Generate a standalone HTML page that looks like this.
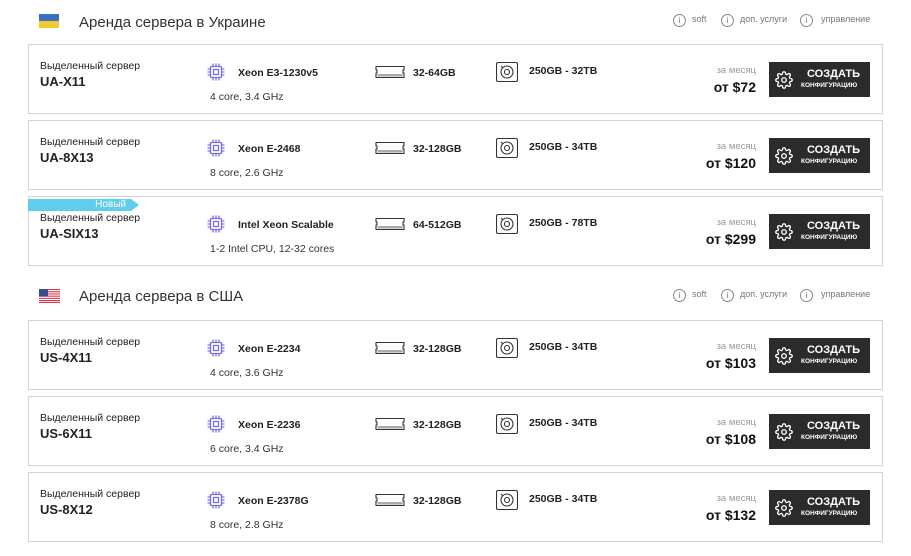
<!DOCTYPE html>
<html><head><meta charset="utf-8"><style>
*{margin:0;padding:0;box-sizing:border-box}
body{width:911px;height:556px;background:#fff;font-family:"Liberation Sans","DejaVu Sans",sans-serif;color:#222;position:relative;overflow:hidden}
.a{position:absolute;white-space:nowrap}
.card{position:absolute;left:28px;width:855px;height:70px;border:1px solid #d4d4d4;background:#fff}
.lbl{font-size:10.5px;color:#222}
.nm{font-size:13px;font-weight:bold;color:#222}
.sp{font-size:10.5px;font-weight:bold;color:#222}
.sub{font-size:10.5px;color:#333}
.zm{font-size:9.5px;color:#999;text-align:right}
.pr{font-size:14px;font-weight:bold;color:#111;text-align:right}
.btn{position:absolute;width:101px;height:35px;background:#2b2b2b;color:#fff}
.h{font-size:15px;color:#333}
.inf{font-size:9px;color:#777}
.ic{position:absolute;width:13px;height:13px;border:1px solid #888;border-radius:50%;font-size:8px;color:#777;text-align:center;line-height:11px}
</style></head><body>

<div class="a" style="left:39px;top:14px;width:20px;height:7px;background:#3a6fc4"></div>
<div class="a" style="left:39px;top:21px;width:20px;height:7px;background:#f0cc2c"></div>
<div class="a h" style="left:79px;top:14px">Аренда сервера в Украине</div>
<div class="ic" style="left:673px;top:14px">i</div><div class="a inf" style="left:692px;top:14px">soft</div>
<div class="ic" style="left:721px;top:14px">i</div><div class="a inf" style="left:740px;top:14px">доп. услуги</div>
<div class="ic" style="left:800px;top:14px">i</div><div class="a inf" style="left:821px;top:14px">управление</div>

<svg class="a" style="left:39px;top:289px" width="21" height="14" viewBox="0 0 21 14">
<rect width="21" height="14" fill="#fff"/>
<g fill="#d33a4a"><rect y="0" width="21" height="1.1"/><rect y="2.2" width="21" height="1.1"/><rect y="4.4" width="21" height="1.1"/><rect y="6.6" width="21" height="1.1"/><rect y="8.8" width="21" height="1.1"/><rect y="11" width="21" height="1.1"/><rect y="12.9" width="21" height="1.1"/></g>
<rect width="9" height="7.5" fill="#3c4a8c"/></svg>
<div class="a h" style="left:79px;top:288px">Аренда сервера в США</div>
<div class="ic" style="left:673px;top:289px">i</div><div class="a inf" style="left:692px;top:289px">soft</div>
<div class="ic" style="left:721px;top:289px">i</div><div class="a inf" style="left:740px;top:289px">доп. услуги</div>
<div class="ic" style="left:800px;top:289px">i</div><div class="a inf" style="left:821px;top:289px">управление</div>

<div id="cards"></div>
<script>
var d=[[44,"UA-X11","Xeon E3-1230v5","4 core, 3.4 GHz","32-64GB","250GB - 32TB","от $72"],
[120,"UA-8X13","Xeon E-2468","8 core, 2.6 GHz","32-128GB","250GB - 34TB","от $120"],
[196,"UA-SIX13","Intel Xeon Scalable","1-2 Intel CPU, 12-32 cores","64-512GB","250GB - 78TB","от $299"],
[320,"US-4X11","Xeon E-2234","4 core, 3.6 GHz","32-128GB","250GB - 34TB","от $103"],
[396,"US-6X11","Xeon E-2236","6 core, 3.4 GHz","32-128GB","250GB - 34TB","от $108"],
[472,"US-8X12","Xeon E-2378G","8 core, 2.8 GHz","32-128GB","250GB - 34TB","от $132"]];
var cpu='<svg width="18" height="18" viewBox="0 0 18 18" fill="none" stroke="#7b6ee0" stroke-width="1.3"><rect x="3.5" y="3.5" width="11" height="11" rx="1"/><rect x="6.5" y="6.5" width="5" height="5"/><path d="M6 0.5v3M9 0.5v3M12 0.5v3M6 14.5v3M9 14.5v3M12 14.5v3M0.5 6h3M0.5 9h3M0.5 12h3M14.5 6h3M14.5 9h3M14.5 12h3"/></svg>';
var ram='<svg width="30" height="14" viewBox="0 0 30 14" fill="none" stroke="#333" stroke-width="1.1"><path d="M1 1.5h28v3.5h-1v3h1v4.5H1V8h1V5H1z"/><rect x="2.5" y="9" width="25" height="2.5" fill="#aaa" stroke="none"/></svg>';
var hdd='<svg width="22" height="20" viewBox="0 0 22 20" fill="none" stroke="#333" stroke-width="1.1"><rect x="0.5" y="0.5" width="21" height="19" rx="1.5"/><circle cx="11" cy="10" r="6"/><circle cx="11" cy="10" r="2.5"/><path d="M5 4l2 2"/></svg>';
var gear='<svg width="18" height="18" viewBox="0 0 24 24" fill="none" stroke="#fff" stroke-width="1.8"><circle cx="12" cy="12" r="3"/><path d="M19.4 15a1.7 1.7 0 0 0 .3 1.8l.1.1a2 2 0 1 1-2.8 2.8l-.1-.1a1.7 1.7 0 0 0-1.8-.3 1.7 1.7 0 0 0-1 1.5V21a2 2 0 1 1-4 0v-.1a1.7 1.7 0 0 0-1.1-1.5 1.7 1.7 0 0 0-1.8.3l-.1.1a2 2 0 1 1-2.8-2.8l.1-.1a1.7 1.7 0 0 0 .3-1.8 1.7 1.7 0 0 0-1.5-1H3a2 2 0 1 1 0-4h.1a1.7 1.7 0 0 0 1.5-1.1 1.7 1.7 0 0 0-.3-1.8l-.1-.1a2 2 0 1 1 2.8-2.8l.1.1a1.7 1.7 0 0 0 1.8.3H9a1.7 1.7 0 0 0 1-1.5V3a2 2 0 1 1 4 0v.1a1.7 1.7 0 0 0 1 1.5 1.7 1.7 0 0 0 1.8-.3l.1-.1a2 2 0 1 1 2.8 2.8l-.1.1a1.7 1.7 0 0 0-.3 1.8V9a1.7 1.7 0 0 0 1.5 1H21a2 2 0 1 1 0 4h-.1a1.7 1.7 0 0 0-1.5 1z"/></svg>';
var h='';
d.forEach(function(c){var T=c[0];
h+='<div class="card" style="top:'+T+'px"></div>';
if(c[1]=="UA-SIX13"){h+='<div class="a" style="left:28px;top:'+(T+3)+'px;width:103px;height:12px;background:#5fcdec;color:#fff;font-size:10px;line-height:12px;text-align:right;padding-right:5px">Новый</div><div class="a" style="left:131px;top:'+(T+3)+'px;width:0;height:0;border-top:6px solid transparent;border-bottom:6px solid transparent;border-left:8px solid #5fcdec"></div>';}
h+='<div class="a lbl" style="left:40px;top:'+(T+16)+'px">Выделенный сервер</div>';
h+='<div class="a nm" style="left:40px;top:'+(T+30)+'px">'+c[1]+'</div>';
h+='<div class="a" style="left:207px;top:'+(T+19)+'px">'+cpu+'</div>';
h+='<div class="a sp" style="left:238px;top:'+(T+23)+'px">'+c[2]+'</div>';
h+='<div class="a sub" style="left:210px;top:'+(T+47)+'px">'+c[3]+'</div>';
h+='<div class="a" style="left:375px;top:'+(T+21)+'px">'+ram+'</div>';
h+='<div class="a sp" style="left:413px;top:'+(T+23)+'px">'+c[4]+'</div>';
h+='<div class="a" style="left:496px;top:'+(T+18)+'px">'+hdd+'</div>';
h+='<div class="a sp" style="left:529px;top:'+(T+21)+'px">'+c[5]+'</div>';
h+='<div class="a zm" style="right:155px;top:'+(T+21)+'px">за месяц</div>';
h+='<div class="a pr" style="right:155px;top:'+(T+35)+'px">'+c[6]+'</div>';
h+='<div class="btn" style="left:769px;top:'+(T+18)+'px"><div class="a" style="left:6px;top:9px">'+gear+'</div><div class="a" style="left:38px;top:6px;font-size:11px;font-weight:bold">СОЗДАТЬ</div><div class="a" style="left:32px;top:20px;font-size:6.5px;font-weight:bold">КОНФИГУРАЦИЮ</div></div>';
});
document.getElementById('cards').outerHTML=h;
</script>
</body></html>
